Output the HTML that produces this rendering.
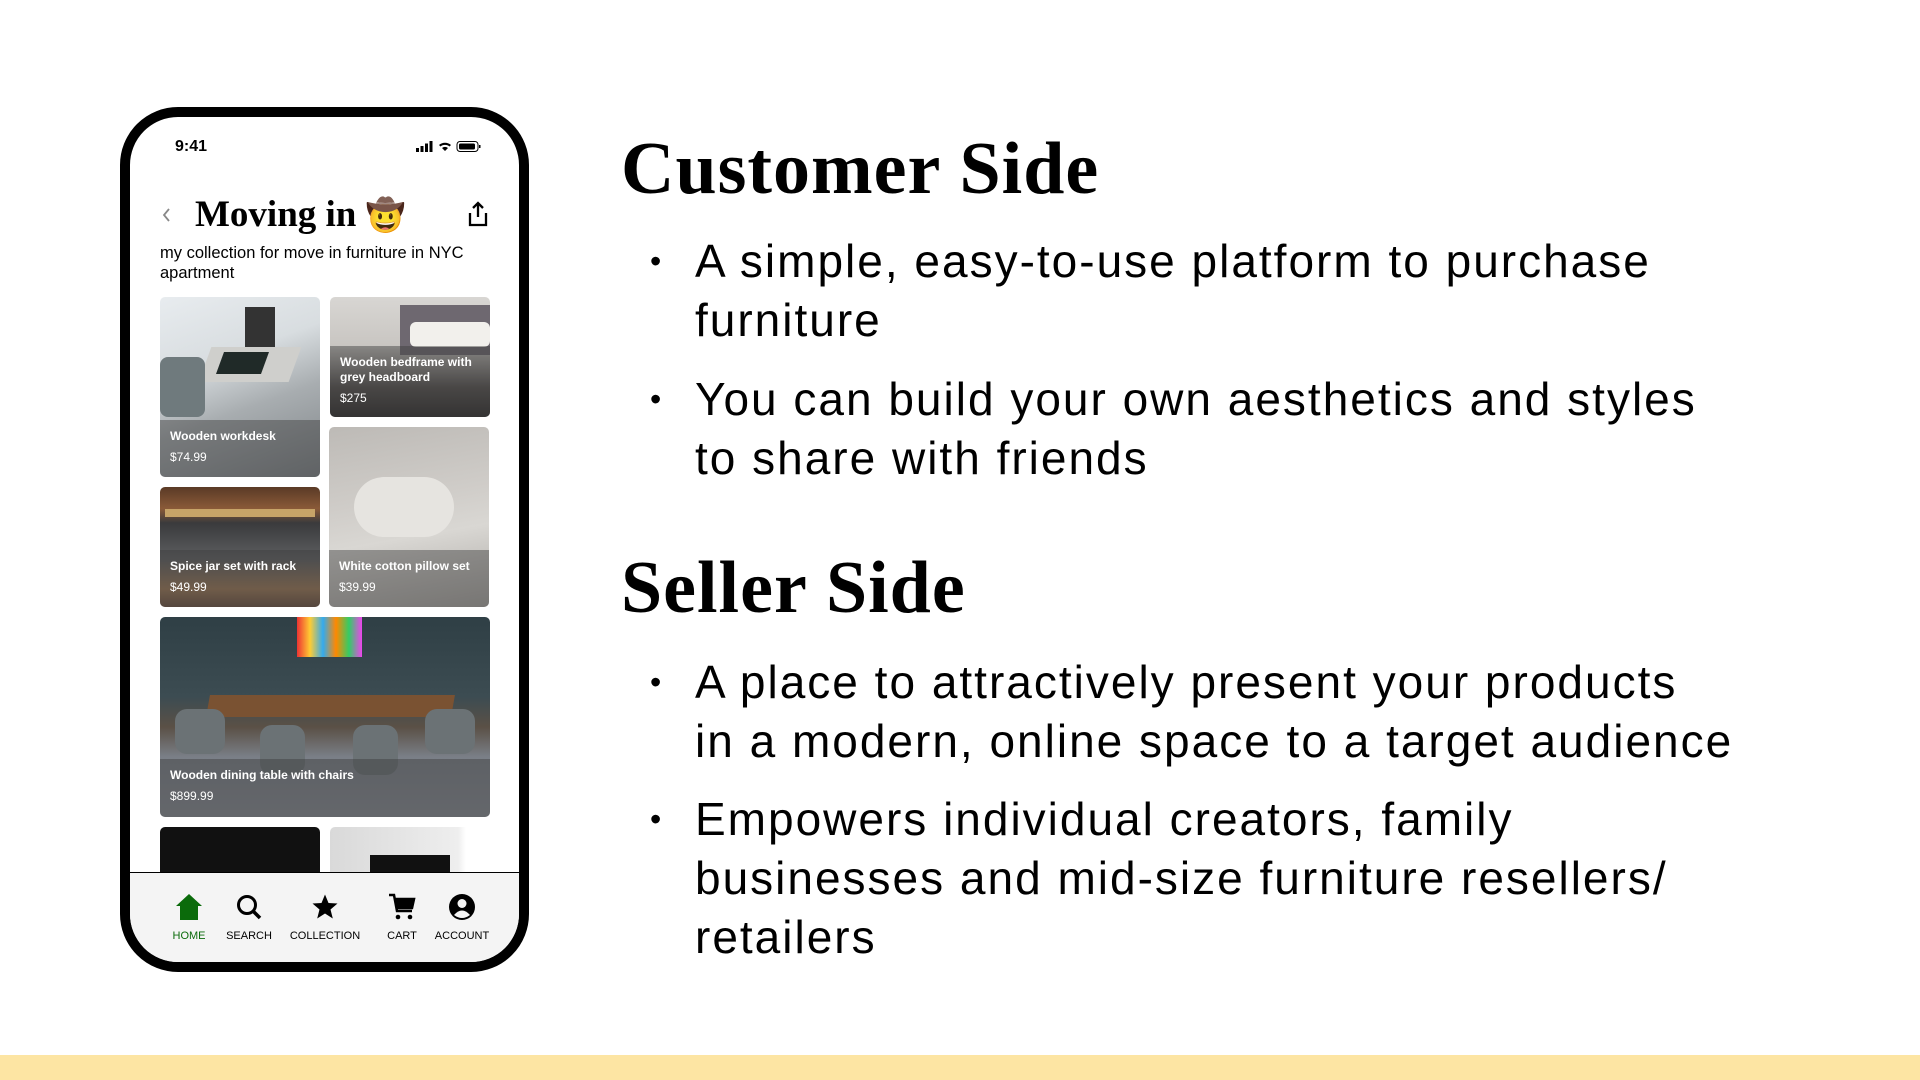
<!DOCTYPE html>
<html><head><meta charset="utf-8"><style>
*{margin:0;padding:0;box-sizing:border-box}
body{width:1920px;height:1080px;background:#fff;position:relative;overflow:hidden;font-family:"Liberation Sans",Roboto,sans-serif;color:#000}
.phone{position:absolute;left:120px;top:107px;width:409px;height:865px;border:10px solid #000;border-radius:58px;overflow:hidden;background:#fff}
.abs{position:absolute}
.card{position:absolute;border-radius:5px;overflow:hidden}
.cap{position:absolute;left:0;right:0;bottom:0;height:57px;background:rgba(60,60,60,.45);color:#fff;padding:9px 10px 0 10px;font-size:12px;line-height:15px}
.cap b{display:block;font-weight:bold}
.cap span{display:block;margin-top:6px;font-weight:normal}
.nav{position:absolute;left:0;right:0;top:755px;height:100px;background:#f4f4f4;border-top:1.5px solid #000}
.lbl{position:absolute;top:57px;font-size:11px;transform:translateX(-50%);white-space:nowrap}
.ic{position:absolute;top:20px;transform:translateX(-50%)}
h1{position:absolute;font-family:"Liberation Serif",serif;font-weight:bold;font-size:74px;letter-spacing:1px;left:621px;line-height:1}
.b{position:absolute;left:695px;font-size:46px;line-height:59px;width:1200px;letter-spacing:2px}
.b:before{content:"•";position:absolute;left:-45px;font-size:32px;letter-spacing:0}
</style></head><body>
<div class="phone">
 <div class="abs" style="left:45px;top:21px;font-size:16px;font-weight:bold">9:41</div>
 <svg class="abs" style="left:286px;top:23px" width="70" height="14" viewBox="0 0 70 14">
  <rect x="0" y="8" width="3" height="4" /><rect x="4.5" y="6" width="3" height="6"/><rect x="9" y="3.5" width="3" height="8.5"/><rect x="13.5" y="1" width="3" height="11"/>
  <path d="M23 5 A9 9 0 0 1 35 5 L33.5 6.5 A7 7 0 0 0 24.5 6.5Z M26 8 A5 5 0 0 1 32 8 L29 11Z"/>
  <rect x="41" y="1.5" width="21" height="10" rx="3" fill="none" stroke="#000" stroke-width="1"/><rect x="43" y="3.5" width="16" height="6" rx="1.5"/><rect x="63" y="5" width="1.5" height="3"/>
 </svg>
 <svg class="abs" style="left:31px;top:89px" width="12" height="18"><path d="M8 3 L3 9 L8 15" stroke="#888" stroke-width="1.8" fill="none"/></svg>
 <div class="abs" style="left:65px;top:76px;font-family:'Liberation Serif',serif;font-weight:bold;font-size:37px">Moving in <span style="font-size:32px">🤠</span></div>
 <svg class="abs" style="left:335px;top:83px" width="26" height="28" viewBox="0 0 26 28"><path d="M13 3 V17 M8 8 L13 3 L18 8 M5 13 V25 H21 V13" stroke="#000" stroke-width="2.3" fill="none"/></svg>
 <div class="abs" style="left:30px;top:126px;font-size:16.5px;line-height:20px;width:340px">my collection for move in furniture in NYC apartment</div>

 <div class="card" style="left:30px;top:180px;width:160px;height:180px;background:linear-gradient(160deg,#e8ecef 0%,#d8dde0 35%,#a8adb0 60%,#7e8387 100%)">
  <div class="abs" style="left:85px;top:10px;width:30px;height:40px;background:#333"></div>
  <div class="abs" style="left:45px;top:50px;width:90px;height:35px;background:#cfcfcc;transform:skewX(-20deg)"></div>
  <div class="abs" style="left:60px;top:55px;width:45px;height:22px;background:#202a28;transform:skewX(-20deg)"></div>
  <div class="abs" style="left:0;top:60px;width:45px;height:60px;background:#6f7a7d;border-radius:8px"></div>
  <div class="cap"><b>Wooden workdesk</b><span>$74.99</span></div></div>
 <div class="card" style="left:200px;top:180px;width:160px;height:120px;background:linear-gradient(180deg,#d8d6d3 0%,#c9c6c2 40%,#55514f 75%,#2e2c2c 100%)">
  <div class="abs" style="left:70px;top:8px;width:90px;height:50px;background:#6e6870"></div>
  <div class="abs" style="left:80px;top:25px;width:80px;height:25px;background:#f2f0ec;border-radius:6px"></div>
  <div class="cap" style="height:71px"><b>Wooden bedframe with grey headboard</b><span>$275</span></div></div>
 <div class="card" style="left:199px;top:310px;width:160px;height:180px;background:linear-gradient(170deg,#bdbab6 0%,#cfccc8 40%,#d9d7d3 60%,#a9a6a2 100%)">
  <div class="abs" style="left:25px;top:50px;width:100px;height:60px;background:#e6e4e0;border-radius:30px"></div>
  <div class="cap"><b>White cotton pillow set</b><span>$39.99</span></div></div>
 <div class="card" style="left:30px;top:370px;width:160px;height:120px;background:linear-gradient(180deg,#5a3a26 0%,#8a5a38 18%,#3a3a3c 30%,#5d5e60 60%,#9b7755 85%,#6a5040 100%)">
  <div class="abs" style="left:5px;top:22px;width:150px;height:8px;background:#c7a468"></div>
  <div class="cap"><b>Spice jar set with rack</b><span>$49.99</span></div></div>
 <div class="card" style="left:30px;top:500px;width:330px;height:200px;background:linear-gradient(180deg,#2f3f45 0%,#3c4c52 40%,#5a5046 55%,#7a7f87 70%,#868b93 100%)">
  <div class="abs" style="left:137px;top:0;width:65px;height:40px;background:linear-gradient(90deg,#e33 0,#fc3 20%,#3ae 40%,#f80 60%,#3c6 80%,#e4e 100%)"></div>
  <div class="abs" style="left:48px;top:78px;width:245px;height:22px;background:#7a5232;transform:skewX(-10deg)"></div>
  <div class="abs" style="left:15px;top:92px;width:50px;height:45px;background:#6b7275;border-radius:12px"></div>
  <div class="abs" style="left:100px;top:108px;width:45px;height:50px;background:#6b7275;border-radius:12px"></div>
  <div class="abs" style="left:193px;top:108px;width:45px;height:50px;background:#6b7275;border-radius:12px"></div>
  <div class="abs" style="left:265px;top:92px;width:50px;height:45px;background:#6b7275;border-radius:12px"></div>
  <div class="cap" style="height:58px"><b>Wooden dining table with chairs</b><span>$899.99</span></div></div>
 <div class="card" style="left:30px;top:710px;width:160px;height:80px;background:#111"></div>
 <div class="card" style="left:200px;top:710px;width:160px;height:80px;background:linear-gradient(90deg,#d9d9d9,#eee 80%,#fff 85%)"><div class="abs" style="left:40px;top:28px;width:80px;height:30px;background:#111"></div></div>

 <div class="nav">
  <svg class="ic" style="left:59px" width="28" height="28" viewBox="0 0 28 28"><path d="M14 1 L27 13 H23 V27 H5 V13 H1Z" fill="#0b6b0b"/></svg>
  <svg class="ic" style="left:119px" width="28" height="28" viewBox="0 0 28 28"><circle cx="12" cy="12" r="8.5" stroke="#000" stroke-width="3" fill="none"/><path d="M18 18 L25 25" stroke="#000" stroke-width="3.5"/></svg>
  <svg class="ic" style="left:195px" width="28" height="28" viewBox="0 0 28 28"><path d="M14 1.5 L17.5 10 L26.5 10.5 L19.5 16.5 L21.8 25.5 L14 20.5 L6.2 25.5 L8.5 16.5 L1.5 10.5 L10.5 10Z"/></svg>
  <svg class="ic" style="left:272px" width="28" height="28" viewBox="0 0 28 28"><path d="M1 2 H6 L9 18 H24 M7 6 H26 L24 15 H8.5" stroke="#000" stroke-width="2.5" fill="none"/><path d="M7.5 6 H26 L24 15 H9Z"/><circle cx="10" cy="24" r="2.3"/><circle cx="22" cy="24" r="2.3"/></svg>
  <svg class="ic" style="left:332px" width="28" height="28" viewBox="0 0 28 28"><circle cx="14" cy="14" r="13"/><circle cx="14" cy="10.5" r="4.5" fill="#f4f4f4"/><path d="M6 22 Q14 13 22 22 Q14 28 6 22Z" fill="#f4f4f4"/></svg>
  <div class="lbl" style="left:59px;color:#0b6b0b">HOME</div>
  <div class="lbl" style="left:119px">SEARCH</div>
  <div class="lbl" style="left:195px">COLLECTION</div>
  <div class="lbl" style="left:272px">CART</div>
  <div class="lbl" style="left:332px">ACCOUNT</div>
 </div>
</div>

<h1 style="top:132px">Customer Side</h1>
<div class="b" style="top:232px">A simple, easy-to-use platform to purchase<br>furniture</div>
<div class="b" style="top:370px">You can build your own aesthetics and styles<br>to share with friends</div>
<h1 style="top:551px">Seller Side</h1>
<div class="b" style="top:653px">A place to attractively present your products<br>in a modern, online space to a target audience</div>
<div class="b" style="top:790px">Empowers individual creators, family<br>businesses and mid-size furniture resellers/<br>retailers</div>
<div class="abs" style="left:0;top:1055px;width:1920px;height:25px;background:#fde5a3"></div>
</body></html>
